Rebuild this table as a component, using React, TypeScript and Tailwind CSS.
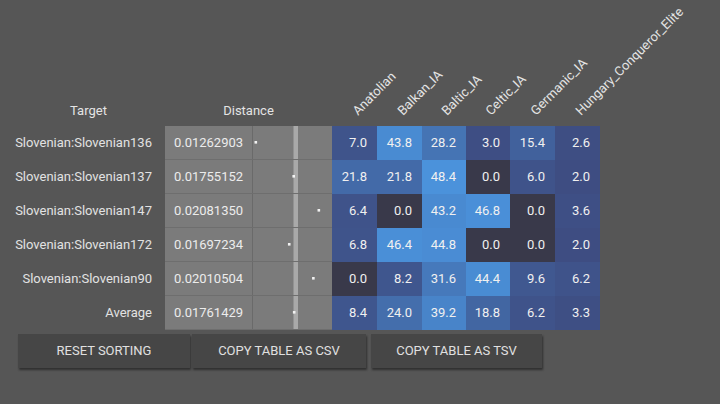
import React from "react";

const populations = [
  "Anatolian",
  "Balkan_IA",
  "Baltic_IA",
  "Celtic_IA",
  "Germanic_IA",
  "Hungary_Conqueror_Elite",
];
const colWidths = ["w-[45px]", "w-[45px]", "w-[44px]", "w-[44px]", "w-[45px]", "w-[45px]"];

const rows = [
  { name: "Slovenian:Slovenian136", dist: 0.01262903, vals: [7.0, 43.8, 28.2, 3.0, 15.4, 2.6] },
  { name: "Slovenian:Slovenian137", dist: 0.01755152, vals: [21.8, 21.8, 48.4, 0.0, 6.0, 2.0] },
  { name: "Slovenian:Slovenian147", dist: 0.0208135, vals: [6.4, 0.0, 43.2, 46.8, 0.0, 3.6] },
  { name: "Slovenian:Slovenian172", dist: 0.01697234, vals: [6.8, 46.4, 44.8, 0.0, 0.0, 2.0] },
  { name: "Slovenian:Slovenian90", dist: 0.02010504, vals: [0.0, 8.2, 31.6, 44.4, 9.6, 6.2] },
  { name: "Average", dist: 0.01761429, vals: [8.4, 24.0, 39.2, 18.8, 6.2, 3.3] },
];

// heat colour for a percentage
function heat(v: number) {
  if (v === 0) return "rgb(57,57,74)";
  const t = Math.min(v / 50, 1);
  const r = Math.round(61 + t * 14);
  const g = Math.round(74 + t * 74);
  const b = Math.round(126 + t * 96);
  return `rgb(${r},${g},${b})`;
}

// little dot plot inside the distance column
function DistPlot({ value }: { value: number }) {
  const x = 2.7 + (value - 0.01262903) * 7700;
  return (
    <svg width="79" height="33" className="block">
      <rect x="40.5" y="0" width="4.5" height="33" fill="#a9a9a9" />
      <rect x={x - 1.2} y="15" width="2.6" height="2.6" fill="#f2f2f2" />
    </svg>
  );
}

export default function App() {
  return (
    <div
      className="min-h-screen w-full bg-[#565656] text-[13px] text-[#e4e4e4] pt-[96px] pl-[12px]"
      style={{ fontFamily: "Roboto, 'Liberation Sans', sans-serif" }}
    >
      {/* Header */}
      <div className="flex h-[30px] items-center">
        <div className="w-[153px] text-center">Target</div>
        <div className="w-[167px] text-center">Distance</div>
        {populations.map((p, i) => (
          <div key={p} className={`relative h-full ${colWidths[i]}`}>
            <span className="absolute left-[calc(50%+5px)] bottom-[8px] origin-bottom-left -rotate-45 whitespace-nowrap leading-[15px]">
              {p}
            </span>
          </div>
        ))}
      </div>

      {/* Body */}
      <div className="flex flex-col">
        {rows.map((r) => (
          <div key={r.name} className="flex h-[34px]">
            <div className="w-[153px] flex items-center justify-end pr-[13px] text-[#e2e2e2]">
              {r.name}
            </div>
            <div className="flex bg-[#7b7b7b] border-b border-[#6e6e6e]">
              <div className="w-[88px] flex items-center justify-center border-r border-[#6a6a6a] text-[#ececec]">
                {r.dist.toFixed(8)}
              </div>
              <div className="w-[79px]">
                <DistPlot value={r.dist} />
              </div>
            </div>
            {r.vals.map((v, i) => (
              <div
                key={i}
                className={`${colWidths[i]} flex items-center justify-end pr-[10px] text-[#f0f0f0]`}
                style={{ backgroundColor: heat(v) }}
              >
                {v.toFixed(1)}
              </div>
            ))}
          </div>
        ))}
      </div>

      {/* Buttons */}
      <div className="flex mt-[4px] ml-[6px]">
        <button className="w-[172px] h-[34px] bg-[#464646] text-[#e0e0e0] shadow-[1px_2px_2px_rgba(0,0,0,0.45)]">
          RESET SORTING
        </button>
        <button className="ml-[2px] w-[174px] h-[34px] bg-[#464646] text-[#e0e0e0] shadow-[1px_2px_2px_rgba(0,0,0,0.45)]">
          COPY TABLE AS CSV
        </button>
        <button className="ml-[5px] w-[171px] h-[34px] bg-[#464646] text-[#e0e0e0] shadow-[1px_2px_2px_rgba(0,0,0,0.45)]">
          COPY TABLE AS TSV
        </button>
      </div>
    </div>
  );
}
